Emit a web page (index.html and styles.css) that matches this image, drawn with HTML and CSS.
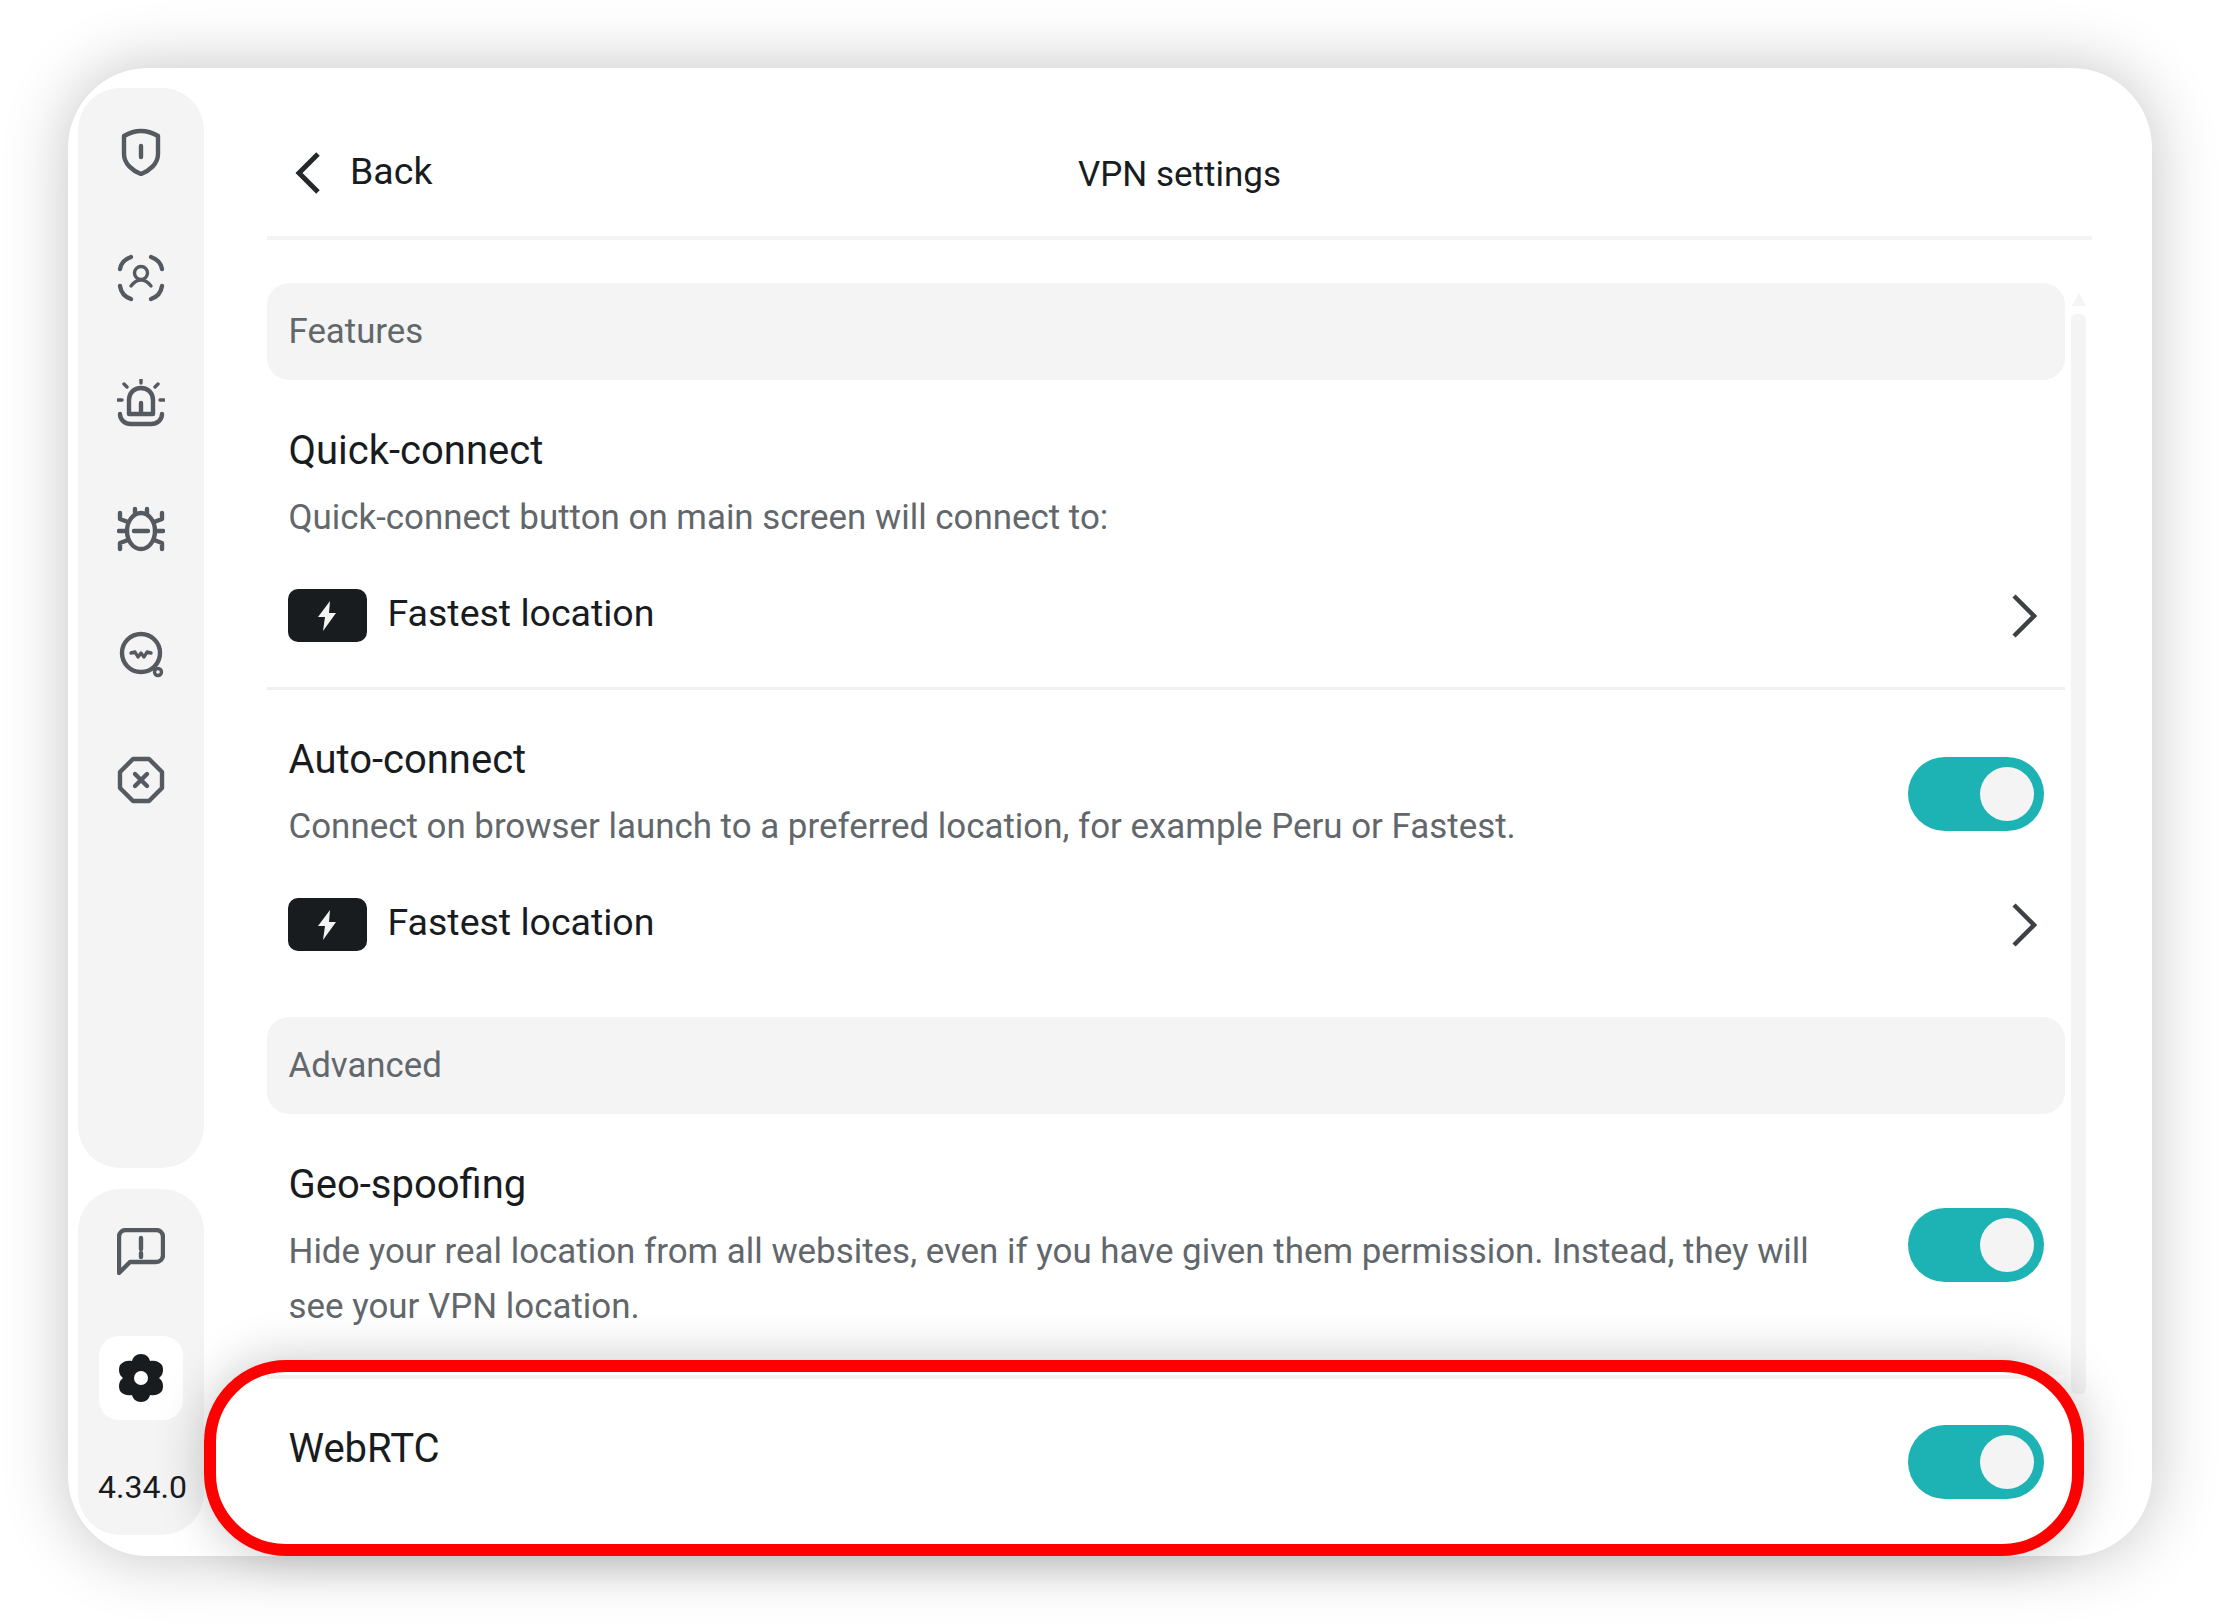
FILE: index.html
```html
<!DOCTYPE html>
<html lang="en">
<head>
<meta charset="utf-8">
<title>VPN settings</title>
<link rel="stylesheet" href="styles.css">
</head>
<body>
<div class="card">
  <nav class="rail">
    <div class="rail-top">
      <svg class="ico" viewBox="0 0 48 48"><path class="ln" d="M24 3C30 3 36 5 41 8V26C41 36 32 43 24 46C16 43 7 36 7 26V8C12 5 18 3 24 3Z"/><path class="ln" d="M24 18V29"/></svg>
      <svg class="ico" viewBox="0 0 48 48"><path class="ln" d="M3 15C4 9 8 5 14 3M34 3C40 5 44 9 45 15M3 32C4 39 8 43 14 45M34 45C40 43 44 39 45 32"/><circle class="ln thin" cx="24" cy="19" r="6.5"/><path class="ln thin" d="M14 32C17 28 20 26 24 26C28 26 31 28 34 32"/></svg>
      <svg class="ico" viewBox="0 0 48 48"><path class="ln thin" d="M24 0V4M7 5L10 8M41 5L38 8M1 21H5M43 21H47"/><path class="ln" d="M12 35V21C12 14 17 9 24 9C31 9 36 14 36 21V35Z"/><path class="ln" d="M24 24V33"/><path class="ln" d="M3 35C3 41 8 45 14 45H34C40 45 45 41 45 35"/></svg>
      <svg class="ico" viewBox="0 0 48 48"><ellipse class="ln" cx="24" cy="26" rx="14" ry="18"/><path class="ln" d="M18 8V4M30 8V4M17 26H31"/><path class="ln" d="M3 8V14L11 17M45 8V14L37 17M2 26H10M46 26H38M3 44V38L11 35M45 44V38L37 35"/></svg>
      <svg class="ico" viewBox="0 0 48 48"><circle class="ln" cx="24" cy="22" r="19"/><path class="ln thin" d="M14 22L18 21L21 26L24 22L27 26L30 21L34 22"/><circle class="ln thin" cx="41" cy="41" r="3.5"/></svg>
      <svg class="ico" viewBox="0 0 48 48"><path class="ln" d="M16 3H32L45 16V32L32 45H16L3 32V16Z"/><path class="ln" d="M18 18L30 30M30 18L18 30"/></svg>
    </div>
    <div class="rail-bottom">
      <svg class="ico" viewBox="0 0 48 48"><path class="ln" d="M2 45V9C2 5 5 2 9 2H39C43 2 46 5 46 9V27C46 31 43 34 39 34H13Z"/><path class="ln" d="M24 10V21M24 25V29"/></svg>
      <div class="gear-box">
        <svg class="ico" viewBox="0 0 48 48"><path class="gear" fill-rule="evenodd" d="M24 0C29 0 32 3 33 7C37 6 42 7 45 11C47 16 46 21 42 24C46 27 47 32 45 37C42 41 37 42 33 41C32 45 29 48 24 48C19 48 16 45 15 41C11 42 6 41 3 37C1 32 2 27 6 24C2 21 1 16 3 11C6 7 11 6 15 7C16 3 19 0 24 0ZM24 17A7 7 0 1 0 24 31A7 7 0 1 0 24 17Z"/></svg>
      </div>
      <div class="version">4.34.0</div>
    </div>
  </nav>

  <main class="main">
    <header class="top">
      <a class="back">
        <svg class="chev-left" viewBox="0 0 26 42"><path d="M23 2L4 21L23 40"/></svg>
        <span class="back-label">Back</span>
      </a>
      <h1 class="page-title">VPN settings</h1>
      <span></span>
    </header>

    <div class="scroller">
      <div class="list">
        <div class="bar">Features</div>

        <section class="item item-rule">
          <h2 class="name">Quick-connect</h2>
          <p class="desc">Quick-connect button on main screen will connect to:</p>
          <div class="loc">
            <span class="bolt"><svg viewBox="0 0 24 32"><path d="M15 1L3 17H10L8 31L21 13H14Z"/></svg></span>
            <span class="loc-name">Fastest location</span>
            <svg class="chev-right" viewBox="0 0 26 44"><path d="M3 2L23 22L3 42"/></svg>
          </div>
        </section>

        <section class="item item-auto">
          <div class="head">
            <div>
              <h2 class="name">Auto-connect</h2>
              <p class="desc">Connect on browser launch to a preferred location, for example Peru or Fastest.</p>
            </div>
            <span class="toggle"></span>
          </div>
          <div class="loc">
            <span class="bolt"><svg viewBox="0 0 24 32"><path d="M15 1L3 17H10L8 31L21 13H14Z"/></svg></span>
            <span class="loc-name">Fastest location</span>
            <svg class="chev-right" viewBox="0 0 26 44"><path d="M3 2L23 22L3 42"/></svg>
          </div>
        </section>

        <div class="bar">Advanced</div>

        <section class="item item-geo">
          <div class="head">
            <div class="head-text">
              <h2 class="name">Geo-spoofing</h2>
              <p class="desc">Hide your real location from all websites, even if you have given them permission. Instead, they will see your VPN location.</p>
            </div>
            <span class="toggle"></span>
          </div>
        </section>
      </div>

      <div class="scrollbar">
        <span class="arrow"></span>
        <span class="thumb"></span>
      </div>
    </div>
  </main>

  <div class="callout">
    <div class="callout-row">
      <h2 class="name">WebRTC</h2>
      <span class="toggle"></span>
    </div>
  </div>
</div>
</body>
</html>
```

FILE: styles.css
```css
* { box-sizing: border-box; }

html, body {
  margin: 0;
  height: 100%;
  background: #fff;
  overflow: hidden;
}

body {
  padding: 68px;
  font-family: Roboto, "Liberation Sans", sans-serif;
  color: #181c1f;
}

.card {
  position: relative;
  display: flex;
  height: 1488px;
  padding: 20px 0 21px 10px;
  background: #fff;
  border-radius: 80px;
  box-shadow: 0 0 66px rgba(0, 0, 0, .24);
}

/* side rail */
.rail {
  display: flex;
  flex-direction: column;
  flex: none;
  width: 126px;
  gap: 21px;
}

.rail-top,
.rail-bottom {
  display: flex;
  flex-direction: column;
  align-items: center;
  background: #f4f4f4;
  border-radius: 42px;
}

.rail-top {
  height: 1080px;
  padding-top: 40px;
  gap: 77.7px;
}

.rail-bottom {
  flex: 1;
  padding-top: 39px;
}

.ico {
  display: block;
  flex: none;
  width: 48px;
  height: 48px;
}

.ln {
  fill: none;
  stroke: #555a60;
  stroke-width: 4.4;
  stroke-linecap: round;
  stroke-linejoin: round;
}

.thin { stroke-width: 3.4; }

.gear { fill: #181c1f; }

.gear-box {
  display: flex;
  align-items: center;
  justify-content: center;
  width: 84px;
  height: 84px;
  margin-top: 60px;
  background: #fff;
  border-radius: 20px;
}

.version {
  margin-top: 47px;
  margin-left: 3px;
  font-size: 32px;
  line-height: 40px;
  white-space: nowrap;
}

/* main column */
.main {
  display: flex;
  flex-direction: column;
  flex: none;
  width: 1825px;
  margin-left: 63px;
}

.top {
  display: grid;
  grid-template-columns: 1fr auto 1fr;
  align-items: center;
  height: 152px;
  padding-top: 20px;
  border-bottom: 4px solid #f4f4f4;
}

.back {
  display: flex;
  align-items: center;
  gap: 29px;
  padding-left: 28px;
  font-size: 37.5px;
  line-height: 44px;
}

.back-label { margin-top: -2px; }

.chev-left {
  width: 26px;
  height: 42px;
  margin-top: 2px;
  fill: none;
  stroke: #24282b;
  stroke-width: 5;
}

.page-title {
  margin: 6px 0 0;
  font-size: 35px;
  font-weight: 400;
  line-height: 44px;
}

.scroller {
  display: flex;
  gap: 6px;
  margin-top: 43px;
}

.list {
  flex: none;
  width: 1798px;
}

.bar {
  height: 97px;
  padding-left: 21.5px;
  background: #f4f4f4;
  border-radius: 22px;
  color: #62676c;
  font-size: 34.8px;
  line-height: 97px;
}

.item {
  padding: 49px 21px 0 21.5px;
}

.item-rule {
  padding-bottom: 45px;
  border-bottom: 3px solid #f0f0f0;
}

.item-auto {
  padding-top: 48px;
  padding-bottom: 66px;
}

.item-geo { padding-top: 49px; }

.name {
  margin: 0;
  font-size: 40px;
  font-weight: 400;
  line-height: 44px;
}

.desc {
  margin: 17px 0 0;
  color: #62676c;
  font-size: 34.9px;
  line-height: 55px;
}

.head {
  display: flex;
  align-items: center;
  justify-content: space-between;
}

.head-text { width: 1560px; }

.toggle {
  position: relative;
  display: block;
  flex: none;
  width: 136px;
  height: 74px;
  margin-top: -5px;
  background: #1db3b4;
  border-radius: 37px;
}

.item-geo .toggle { margin-top: -8px; }

.toggle::after {
  content: "";
  position: absolute;
  top: 10px;
  right: 10px;
  width: 54px;
  height: 54px;
  background: #f4f4f4;
  border-radius: 50%;
}

.loc {
  display: flex;
  align-items: center;
  margin-top: 44px;
}

.bolt {
  display: flex;
  align-items: center;
  justify-content: center;
  width: 79px;
  height: 53px;
  margin-left: -1px;
  background: #181c1f;
  border-radius: 10px;
}

.bolt svg {
  width: 24px;
  height: 34px;
  fill: #f4f4f4;
}

.loc-name {
  flex: 1;
  margin-left: 21px;
  margin-top: -5px;
  font-size: 37.5px;
  line-height: 44px;
}

.chev-right {
  width: 26px;
  height: 44px;
  margin-right: 7px;
  fill: none;
  stroke: #3d4145;
  stroke-width: 4.5;
}

/* scrollbar */
.scrollbar {
  display: flex;
  flex-direction: column;
  align-items: center;
  flex: none;
  width: 15px;
  padding-top: 10px;
}

.arrow {
  width: 0;
  height: 0;
  border-left: 7.5px solid transparent;
  border-right: 7.5px solid transparent;
  border-bottom: 13px solid #f4f4f4;
}

.thumb {
  width: 15px;
  height: 1080px;
  margin-top: 8px;
  background: #f4f4f4;
  border-radius: 6px;
}

/* highlighted row lying over the list */
.callout {
  position: absolute;
  left: 136px;
  bottom: 0;
  width: 1880px;
  height: 196px;
  padding: 15px 19px 0 63px;
  background: #fff;
  border-radius: 82px;
  box-shadow: 0 0 50px rgba(0, 0, 0, .22);
}

.callout::after {
  content: "";
  position: absolute;
  inset: 0;
  border: 12px solid #f00;
  border-radius: 82px;
}

.callout-row {
  display: flex;
  align-items: flex-start;
  justify-content: space-between;
  padding: 46px 21px 0 21.5px;
  border-top: 4px solid #f0f0f0;
}

.callout-row .name { margin-top: 2px; }
.callout-row .toggle { margin-top: 0; }
```
